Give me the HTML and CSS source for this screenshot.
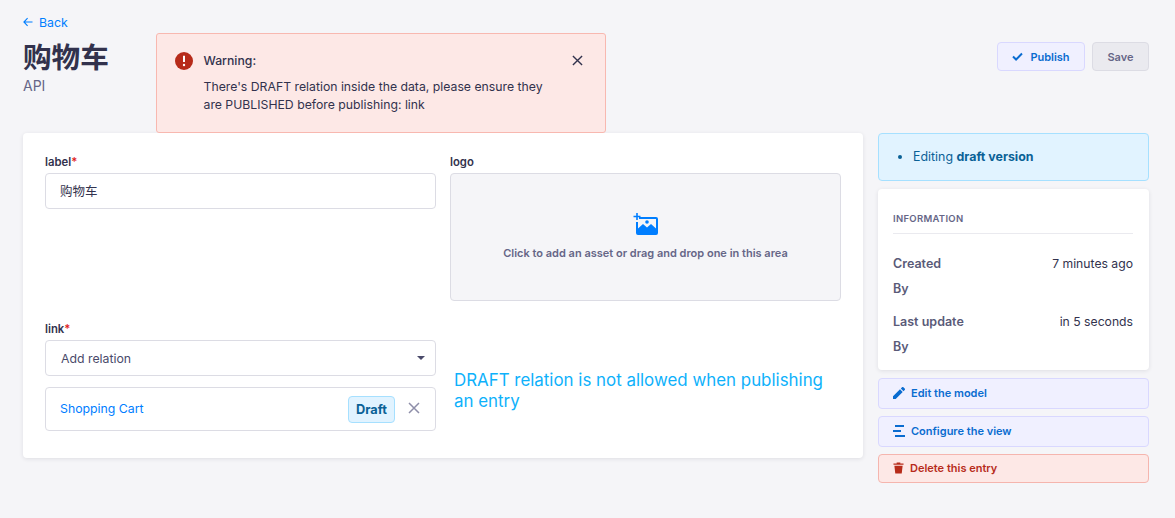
FILE: index.html
```html
<!DOCTYPE html>
<html lang="en">
<head>
<meta charset="utf-8">
<title>购物车</title>
<link rel="stylesheet" href="styles.css">
</head>
<body>
<main class="page">
  <a class="back"><svg class="back-icon" viewBox="0 0 10 10" width="10" height="10"><path d="M9.500 5H1M4.600 1.200 .9 5l3.700 3.800" fill="none" stroke="#007eff" stroke-width="1.100"/></svg>Back</a>
  <header class="head">
    <div>
      <h1 class="title">购物车</h1>
      <p class="subtitle">API</p>
    </div>
    <div class="actions">
      <button class="btn btn-publish"><svg viewBox="0 0 12 10" width="11" height="9"><path d="M1 5l3.400 3.400L11 1.600" fill="none" stroke="#0a6cd0" stroke-width="2.200"/></svg>Publish</button>
      <button class="btn btn-save">Save</button>
    </div>
  </header>
  <div class="content">
    <section class="card form">
      <div class="field">
        <label class="label">label<span class="req">*</span></label>
        <div class="input input-cjk">购物车</div>
      </div>
      <div class="field">
        <label class="label">logo</label>
        <div class="drop">
          <svg viewBox="0 0 26 22" width="26" height="22"><path d="M6 4h17a2 2 0 0 1 2 2v14a2 2 0 0 1-2 2H5a2 2 0 0 1-2-2V9h2v6.500l5-4.500 4 3.500 4-3.500 5 4.500V6H6z" fill="#007eff"/><circle cx="14" cy="9" r="1.800" fill="#007eff"/><path d="M4 0v7M0.500 3.500h7" stroke="#007eff" stroke-width="1.600"/></svg>
          <p class="drop-text">Click to add an asset or drag and drop one in this area</p>
        </div>
      </div>
      <div class="field field-link">
        <label class="label">link<span class="req">*</span></label>
        <div class="input select">Add relation<span class="caret"></span></div>
        <div class="relation">
          <a class="rel-link">Shopping Cart</a>
          <span class="badge">Draft</span>
          <svg class="rel-x" viewBox="0 0 12 12" width="12" height="12"><path d="M1 1l10 10M11 1 1 11" stroke="#8e8ea9" stroke-width="1.500"/></svg>
        </div>
      </div>
      <p class="note">DRAFT relation is not allowed when publishing an entry</p>
    </section>
    <aside class="side">
      <div class="status"><ul class="status-list"><li>Editing <strong>draft version</strong></li></ul></div>
      <div class="card info">
        <h2 class="info-title">INFORMATION</h2>
        <dl class="rows">
          <div class="row"><dt>Created</dt><dd>7 minutes ago</dd></div>
          <div class="row"><dt>By</dt></div>
          <div class="row row-gap"><dt>Last update</dt><dd>in 5 seconds</dd></div>
          <div class="row"><dt>By</dt></div>
        </dl>
      </div>
      <div class="links">
        <button class="link-btn"><svg viewBox="0 0 12 12" width="12" height="12"><path d="M0 12V9.300L7 2.300 9.700 5 2.700 12zM7.800 1.500 9 .3a1 1 0 0 1 1.400 0l1.300 1.300a1 1 0 0 1 0 1.400L10.500 4.200z" fill="#0a6cd0"/></svg>Edit the model</button>
        <button class="link-btn"><svg viewBox="0 0 12 12" width="12" height="12"><path d="M2 0h9v2H2zM0 5h8v2H0zM2 10h10v2H2z" fill="#0a6cd0"/></svg>Configure the view</button>
        <button class="link-btn link-danger"><svg viewBox="0 0 12 12" width="11" height="12"><path d="M4 0h4v1h3.500v1.500H.5V1H4zM1.500 3.500h9L9.500 12h-7z" fill="#b72b1a"/></svg>Delete this entry</button>
      </div>
    </aside>
  </div>
</main>
<div class="alert" role="alert">
  <svg class="alert-icon" viewBox="0 0 18 18" width="18" height="18"><circle cx="9" cy="9" r="9" fill="#b72b1a"/><path d="M9 3.800v6.200" stroke="#fff" stroke-width="2"/><circle cx="9" cy="13" r="1.200" fill="#fff"/></svg>
  <div class="alert-body">
    <p class="alert-title">Warning:</p>
    <p class="alert-text">There's DRAFT relation inside the data, please ensure they are PUBLISHED before publishing: link</p>
  </div>
  <svg class="alert-x" viewBox="0 0 12 12" width="11" height="11"><path d="M1 1l10 10M11 1 1 11" stroke="#32324d" stroke-width="1.500"/></svg>
</div>
</body>
</html>
```
FILE: styles.css
```css
* { box-sizing: border-box; }
html, body { margin: 0; height: 100%; }
body {
  background: #f5f5f8;
  color: #32324d;
  font-family: Inter, "Noto Sans CJK SC", sans-serif;
  font-size: 13px;
  overflow: hidden;
}
p, h1, h2, dl, dd, ul { margin: 0; padding: 0; }
button { font-family: inherit; cursor: pointer; }

.page { padding: 14px 26px 0 23px; }

.back {
  display: flex;
  align-items: center;
  gap: 6px;
  height: 16px;
  color: #007eff;
  font-size: 12.300px;
}

.head {
  display: flex;
  justify-content: space-between;
  align-items: flex-start;
  margin-top: 8px;
  height: 95px;
}
.title {
  font-size: 28.600px;
  line-height: 36px;
  font-weight: 700;
  font-family: "Noto Sans CJK SC", sans-serif;
}
.subtitle { font-size: 14px; line-height: 18px; color: #666687; margin-top: 3px; }
.actions { display: flex; gap: 7px; margin-top: 4px; }

.btn {
  height: 29px;
  border-radius: 4px;
  border: 1px solid;
  font-size: 11px;
  font-weight: 600;
  display: flex;
  align-items: center;
  justify-content: center;
  gap: 7px;
}
.btn-publish { width: 88px; background: #f0f0ff; border-color: #d9d8ff; color: #0a6cd0; }
.btn-save { width: 57px; background: #eaeaef; border-color: #dcdce4; color: #666687; }

.content { display: flex; justify-content: space-between; align-items: flex-start; }

.card {
  background: #fff;
  border-radius: 4px;
  box-shadow: 0 1px 4px rgba(33, 33, 52, .1);
}

.form {
  width: 840px;
  height: 325px;
  padding: 22px 22px 0;
  display: grid;
  grid-template-columns: 391px 391px;
  grid-template-rows: 146px auto;
  column-gap: 14px;
  row-gap: 21px;
}

.label {
  display: block;
  font-size: 11.300px;
  line-height: 14px;
  font-weight: 600;
  margin-bottom: 4px;
}
.req { color: #e0201a; }

.input {
  height: 36px;
  border: 1px solid #dcdce4;
  border-radius: 4px;
  padding: 0 15px;
  font-size: 12.300px;
  display: flex;
  align-items: center;
}
.input-cjk { padding: 0 14px 2px; font-size: 12.500px; }
.select { justify-content: space-between; color: #4a4a6a; }
.caret {
  width: 0;
  height: 0;
  margin-right: -5px;
  border-left: 4px solid transparent;
  border-right: 4px solid transparent;
  border-top: 4px solid #4a4a6a;
}

.drop {
  height: 128px;
  background: #f5f5f8;
  border: 1px solid #dcdce4;
  border-radius: 4px;
  display: flex;
  flex-direction: column;
  align-items: center;
  padding-top: 39px;
}
.drop-text {
  margin-top: 11px;
  font-size: 11px;
  line-height: 14px;
  font-weight: 600;
  color: #666687;
}

.relation {
  margin-top: 11px;
  height: 44px;
  border: 1px solid #dcdce4;
  border-radius: 4px;
  padding: 0 15px 2px 14px;
  display: flex;
  align-items: center;
}
.rel-link { color: #007eff; font-size: 12.300px; flex: 1; }
.badge {
  background: #e1f3ff;
  border: 1px solid #a6e0ff;
  border-radius: 4px;
  color: #0a6196;
  font-size: 12.800px;
  font-weight: 700;
  padding: 0 7px;
  height: 27px;
  line-height: 25px;
  margin: 2px 13px 0 0;
}

.note {
  color: #0eb1fb;
  font-size: 16.900px;
  line-height: 21px;
  align-self: center;
  padding-left: 4px;
  padding-top: 2px;
  width: 391px;
}

.side { width: 271px; display: flex; flex-direction: column; gap: 8px; }

.status {
  height: 48px;
  background: #e1f3ff;
  border: 1px solid #a6e0ff;
  border-radius: 4px;
  padding: 0 0 2px 34px;
  display: flex;
  align-items: center;
  color: #0a6196;
  font-size: 12.400px;
}
.status-list { list-style: disc; }
.status-list strong { font-weight: 700; }

.info { height: 181px; padding: 24px 16px 0 15px; }
.info-title {
  font-size: 9.500px;
  line-height: 12px;
  font-weight: 600;
  letter-spacing: .3px;
  color: #666687;
  padding-bottom: 8px;
  border-bottom: 1px solid #eaeaef;
}
.rows { padding-top: 17px; }
.row {
  display: flex;
  justify-content: space-between;
  height: 25px;
  line-height: 25px;
  font-size: 12.200px;
}
.row dt { color: #5a5a78; font-weight: 600; font-size: 12.500px; }
.row dd { color: #32324d; }
.row-gap { margin-top: 8px; }

.links { display: flex; flex-direction: column; gap: 7px; }
.link-btn {
  height: 31px;
  padding: 0 0 2px 14px;
  border: 1px solid #d9d8ff;
  border-radius: 4px;
  background: #f0f0ff;
  color: #0a6cd0;
  font-size: 11px;
  font-weight: 600;
  display: flex;
  align-items: center;
  gap: 6px;
  text-align: left;
}
.link-danger { height: 29px; background: #fde8e6; border-color: #f5b5ae; color: #b72b1a; }

.alert {
  position: absolute;
  left: 156px;
  top: 33px;
  width: 450px;
  height: 100px;
  background: #fde8e6;
  border: 1px solid #f8b8b0;
  border-radius: 3px;
  padding: 18px 21px 0 18px;
  display: flex;
  align-items: flex-start;
  color: #32324d;
}
.alert-icon { flex: none; }
.alert-body { margin-left: 10.500px; width: 350px; }
.alert-title { font-size: 12.250px; line-height: 18px; font-weight: 500; }
.alert-text { font-size: 12.250px; line-height: 18px; margin-top: 8px; }
.alert-x { flex: none; margin: 3px 1px 0 auto; }
```
